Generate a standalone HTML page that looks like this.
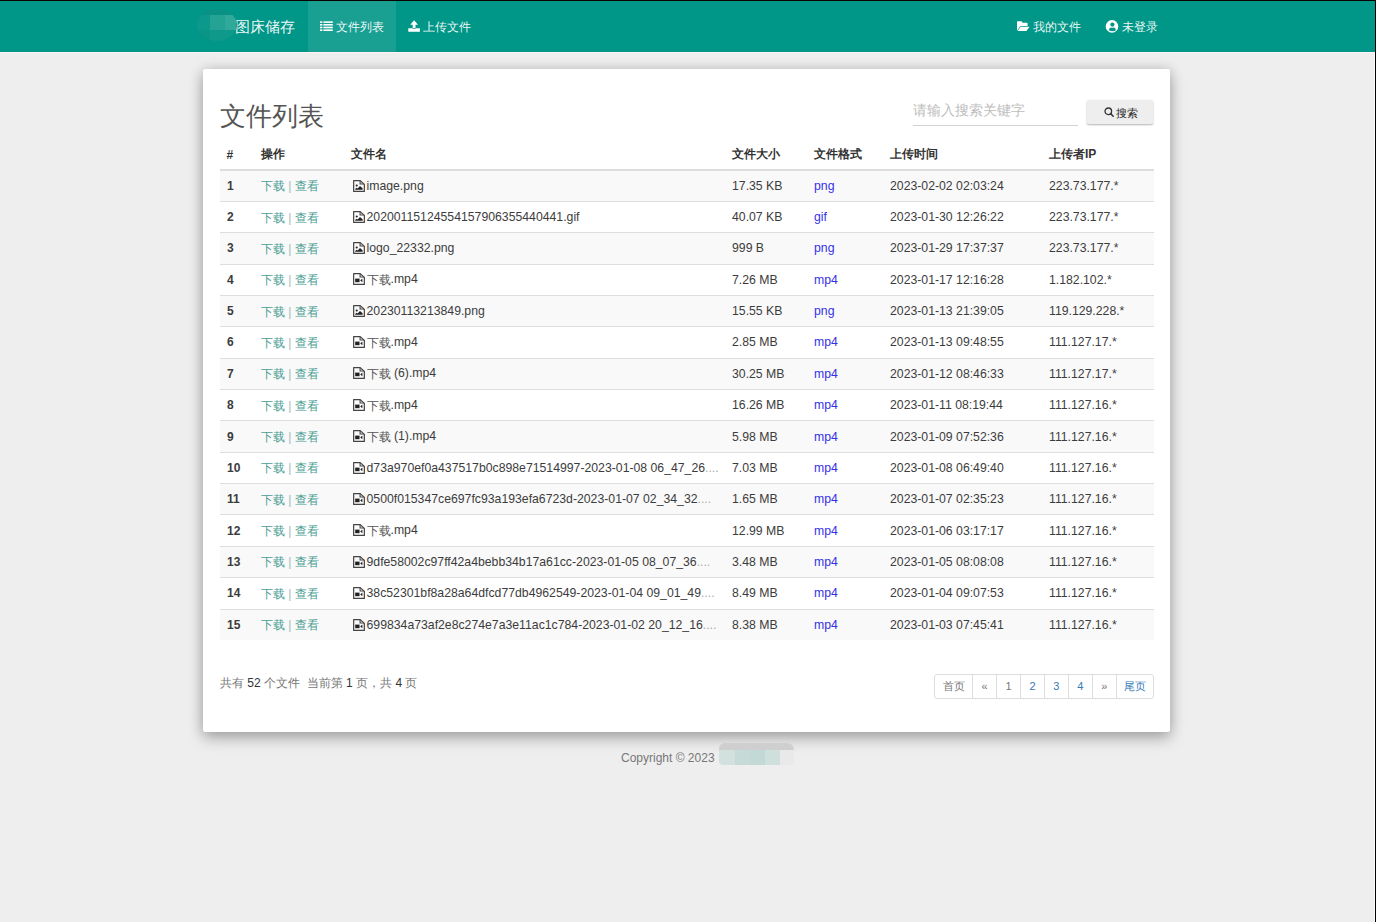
<!DOCTYPE html>
<html><head><meta charset="utf-8">
<style>
*{box-sizing:border-box}
html,body{margin:0;padding:0}
body{background:#eeeeee;font-family:"Liberation Sans",sans-serif;color:#333;font-size:12px;width:1376px;height:922px;overflow:hidden;position:relative}
.topline{position:absolute;left:0;top:0;width:1376px;height:1px;background:#0a0000}
.nav{position:absolute;left:0;top:1px;width:1376px;height:51px;background:#009688}
.navline{position:absolute;left:0;top:52px;width:1376px;height:1px;background:#fbf3f4}
.blob{position:absolute;left:197px;top:9px;width:40px;height:32px;border-radius:50%;overflow:hidden;background:#0b9587;z-index:3}
.blob i{position:absolute;display:block}
.brand{position:absolute;left:235px;top:17px;font-size:15.4px;color:rgba(255,255,255,.93);line-height:20px}
.nitem{position:absolute;top:1px;height:51px;color:rgba(255,255,255,.93);font-size:12px;line-height:51px}
.nitem.active{background:#1a9f93}
.nitem span{position:absolute;top:1px}
.nitem svg{position:absolute}
.card{position:absolute;left:203px;top:69px;width:967px;height:663px;background:#fff;border-radius:2px;box-shadow:0 6px 15px rgba(0,0,0,.28),0 0 13px rgba(0,0,0,.13)}
.title{position:absolute;left:17px;top:30px;font-size:26px;line-height:34px;color:#555;font-weight:300}
.search{position:absolute;left:710px;top:26px;width:165px;height:31px;border-bottom:1px solid #d2d2d2;color:#bdbdbd;font-size:14px;line-height:30px}
.btn{position:absolute;left:883.5px;top:31px;width:66.5px;height:24px;background:#eee;border-radius:2px;box-shadow:0 1px 2px rgba(0,0,0,.3);font-size:11px;line-height:27px;color:#333}
table{position:absolute;left:17px;top:69px;width:934px;border-collapse:collapse;font-size:12px}
th{text-align:left;font-weight:bold;height:32px;border-bottom:2px solid #ddd;padding:2px 0 0 8px;white-space:nowrap}
td{height:31.37px;font-size:12.25px;color:#3c3c3c;border-top:1px solid #ddd;padding:0 0 0 8px;white-space:nowrap}
tbody tr:nth-child(odd) td{background:#f9f9f9}
a{text-decoration:none}
.n{font-weight:bold;padding-left:7px}
.op{color:#4a9e95;position:relative;top:1px}
.sep{color:#9bb;font-size:12px;position:relative;top:1px}
.cj{font-style:normal;color:#555;position:relative;top:1px;font-size:12px}
.dots{font-style:normal;color:#aaa}
.op{font-size:12px}
.n{font-size:12px}
.fmt{color:#3530e6}
.fi{vertical-align:-2px;margin-left:2px;margin-right:1.5px}
.info{position:absolute;left:17px;top:606px;font-size:12px;color:#777}
.info b{font-weight:normal;color:#333}
.pager{position:absolute;left:731px;top:605px;height:25px;display:flex;border:1px solid #ddd;border-radius:3px}
.pager div{height:23px;line-height:22px;text-align:center;font-size:11px;color:#777;border-left:1px solid #ddd}
.pager div:first-child{border-left:0}
.pager .b{color:#337ab7}
.fblob{position:absolute;left:719px;top:743px;width:75px;height:22px;overflow:hidden;border-radius:4px 0 0 4px}
.fblob i{position:absolute;display:block}
.footer{position:absolute;left:621px;top:751px;font-size:12px;color:#777}
</style></head><body>
<svg width="0" height="0" style="position:absolute"><defs>
<symbol id="img" viewBox="0 0 11 12"><path d="M0.6,0.6H6.6L10.4,4.4V11.4H0.6Z" fill="none" stroke="#444" stroke-width="1.1" stroke-linejoin="round"/><path d="M6.5,0.8V3.9H10.2" fill="none" stroke="#444" stroke-width="1"/><circle cx="3.4" cy="5.4" r="1" fill="#222"/><path d="M2,9.7V8.9L3.3,7.7L4.3,8.4L6.4,6.1L8.8,8.3V9.7Z" fill="#222"/></symbol>
<symbol id="vid" viewBox="0 0 11 12"><path d="M0.6,0.6H6.6L10.4,4.4V11.4H0.6Z" fill="none" stroke="#444" stroke-width="1.1" stroke-linejoin="round"/><path d="M6.5,0.8V3.9H10.2" fill="none" stroke="#444" stroke-width="1"/><rect x="2" y="5.6" width="4" height="3.6" fill="#222"/><path d="M6.6,7.4L8.6,5.6V9.2Z" fill="#222"/></symbol>
</defs></svg>
<div class="topline"></div>
<div style="position:absolute;left:1375px;top:0;width:1px;height:922px;background:#000;z-index:5"></div>
<div style="position:absolute;left:1374px;top:53px;width:1px;height:869px;background:#fdfdfd;z-index:5"></div>
<div class="nav"></div>
<div class="navline"></div>
<div class="blob"><i style="left:0;top:0;width:39px;height:6px;background:#0a9084"></i><i style="left:0;top:6px;width:13px;height:15px;background:#0c988a"></i><i style="left:13px;top:6px;width:15px;height:15px;background:#24a294"></i><i style="left:28px;top:6px;width:11px;height:15px;background:#30a99a"></i><i style="left:0;top:21px;width:13px;height:11px;background:#0a9587"></i><i style="left:13px;top:21px;width:26px;height:11px;background:#0e998b"></i></div>
<div class="brand">图床储存</div>
<div class="nitem active" style="left:308px;width:88px"><span style="left:28px">文件列表</span></div>
<div class="nitem" style="left:396px;width:88px"><span style="left:27px">上传文件</span></div>
<div class="nitem" style="left:1005px;width:88px"><span style="left:28px">我的文件</span></div>
<div class="nitem" style="left:1093px;width:88px"><span style="left:28.5px">未登录</span></div>
<svg style="position:absolute;left:320px;top:21px" width="13" height="10" viewBox="0 0 13 10"><g fill="#fff"><rect x="0" y="0.3" width="2.4" height="1.6"/><rect x="3.4" y="0.3" width="9.4" height="1.6"/><rect x="0" y="3" width="2.4" height="1.6"/><rect x="3.4" y="3" width="9.4" height="1.6"/><rect x="0" y="5.7" width="2.4" height="1.6"/><rect x="3.4" y="5.7" width="9.4" height="1.6"/><rect x="0" y="8.4" width="2.4" height="1.6"/><rect x="3.4" y="8.4" width="9.4" height="1.6"/></g></svg>
<svg style="position:absolute;left:408px;top:20px" width="12" height="12" viewBox="0 0 12 12"><g fill="#fff"><path d="M2.2,4.8L6.1,0.3L10,4.8H7.5V8.3H4.7V4.8Z"/><path d="M0.3,8.2H4.6A1.5,0.9 0 0 0 7.6,8.2H11.9V11.7H0.3Z"/></g></svg>
<svg style="position:absolute;left:1017px;top:21px" width="13" height="10" viewBox="0 0 13 10"><g fill="#fff"><path d="M0,0.8Q0,0.2 0.6,0.2H4.6L5.6,1.8H10Q10.6,1.8 10.6,2.4V4.9H3.6L0,9.6Z"/><path d="M0.4,10H9.4L12.6,5.7H3.7Z"/></g></svg>
<svg style="position:absolute;left:1105px;top:19px" width="15" height="15" viewBox="0 0 15 15"><circle cx="7" cy="7.4" r="6.3" fill="#fff"/><circle cx="7.4" cy="5.6" r="2.1" fill="#009688"/><path d="M3.9,11.2Q4.3,8.6 5.8,8.5Q7.4,9.1 9,8.5Q10.6,8.6 10.9,11.2Q9.4,12.2 7.4,12.2Q5.4,12.2 3.9,11.2Z" fill="#009688"/></svg>


<div class="card">
<div class="title">文件列表</div>
<div class="search">请输入搜索关键字</div>
<div class="btn"><svg style="position:absolute;left:17px;top:7px" width="10" height="10" viewBox="0 0 10 10"><circle cx="4.3" cy="4.3" r="3.3" fill="none" stroke="#333" stroke-width="1.3"/><path d="M6.6,6.6L9.2,9.2" stroke="#333" stroke-width="1.5" stroke-linecap="round"/></svg><span style="position:absolute;left:29px;top:0;font-size:10.5px;color:#222">搜索</span></div>
<table>
<thead><tr><th style="width:33px;padding-left:6.5px">#</th><th style="width:90px">操作</th><th style="width:381px">文件名</th><th style="width:82px">文件大小</th><th style="width:76px">文件格式</th><th style="width:159px">上传时间</th><th>上传者IP</th></tr></thead>
<tbody id="tb">
<tr><td class="n">1</td><td><a class="op">下载</a><span class="sep"> | </span><a class="op">查看</a></td><td><svg class="fi" width="12" height="12" viewBox="0 0 11 12" preserveAspectRatio="none"><use href="#img"/></svg><span class="fn">image.png</span></td><td>17.35 KB</td><td><a class="fmt">png</a></td><td>2023-02-02 02:03:24</td><td>223.73.177.*</td></tr>
<tr><td class="n">2</td><td><a class="op">下载</a><span class="sep"> | </span><a class="op">查看</a></td><td><svg class="fi" width="12" height="12" viewBox="0 0 11 12" preserveAspectRatio="none"><use href="#img"/></svg><span class="fn">20200115124554157906355440441.gif</span></td><td>40.07 KB</td><td><a class="fmt">gif</a></td><td>2023-01-30 12:26:22</td><td>223.73.177.*</td></tr>
<tr><td class="n">3</td><td><a class="op">下载</a><span class="sep"> | </span><a class="op">查看</a></td><td><svg class="fi" width="12" height="12" viewBox="0 0 11 12" preserveAspectRatio="none"><use href="#img"/></svg><span class="fn">logo_22332.png</span></td><td>999 B</td><td><a class="fmt">png</a></td><td>2023-01-29 17:37:37</td><td>223.73.177.*</td></tr>
<tr><td class="n">4</td><td><a class="op">下载</a><span class="sep"> | </span><a class="op">查看</a></td><td><svg class="fi" width="12" height="12" viewBox="0 0 11 12" preserveAspectRatio="none"><use href="#vid"/></svg><span class="fn"><i class="cj">下载</i>.mp4</span></td><td>7.26 MB</td><td><a class="fmt">mp4</a></td><td>2023-01-17 12:16:28</td><td>1.182.102.*</td></tr>
<tr><td class="n">5</td><td><a class="op">下载</a><span class="sep"> | </span><a class="op">查看</a></td><td><svg class="fi" width="12" height="12" viewBox="0 0 11 12" preserveAspectRatio="none"><use href="#img"/></svg><span class="fn">20230113213849.png</span></td><td>15.55 KB</td><td><a class="fmt">png</a></td><td>2023-01-13 21:39:05</td><td>119.129.228.*</td></tr>
<tr><td class="n">6</td><td><a class="op">下载</a><span class="sep"> | </span><a class="op">查看</a></td><td><svg class="fi" width="12" height="12" viewBox="0 0 11 12" preserveAspectRatio="none"><use href="#vid"/></svg><span class="fn"><i class="cj">下载</i>.mp4</span></td><td>2.85 MB</td><td><a class="fmt">mp4</a></td><td>2023-01-13 09:48:55</td><td>111.127.17.*</td></tr>
<tr><td class="n">7</td><td><a class="op">下载</a><span class="sep"> | </span><a class="op">查看</a></td><td><svg class="fi" width="12" height="12" viewBox="0 0 11 12" preserveAspectRatio="none"><use href="#vid"/></svg><span class="fn"><i class="cj">下载</i> (6).mp4</span></td><td>30.25 MB</td><td><a class="fmt">mp4</a></td><td>2023-01-12 08:46:33</td><td>111.127.17.*</td></tr>
<tr><td class="n">8</td><td><a class="op">下载</a><span class="sep"> | </span><a class="op">查看</a></td><td><svg class="fi" width="12" height="12" viewBox="0 0 11 12" preserveAspectRatio="none"><use href="#vid"/></svg><span class="fn"><i class="cj">下载</i>.mp4</span></td><td>16.26 MB</td><td><a class="fmt">mp4</a></td><td>2023-01-11 08:19:44</td><td>111.127.16.*</td></tr>
<tr><td class="n">9</td><td><a class="op">下载</a><span class="sep"> | </span><a class="op">查看</a></td><td><svg class="fi" width="12" height="12" viewBox="0 0 11 12" preserveAspectRatio="none"><use href="#vid"/></svg><span class="fn"><i class="cj">下载</i> (1).mp4</span></td><td>5.98 MB</td><td><a class="fmt">mp4</a></td><td>2023-01-09 07:52:36</td><td>111.127.16.*</td></tr>
<tr><td class="n">10</td><td><a class="op">下载</a><span class="sep"> | </span><a class="op">查看</a></td><td><svg class="fi" width="12" height="12" viewBox="0 0 11 12" preserveAspectRatio="none"><use href="#vid"/></svg><span class="fn">d73a970ef0a437517b0c898e71514997-2023-01-08 06_47_26<i class="dots">....</i></span></td><td>7.03 MB</td><td><a class="fmt">mp4</a></td><td>2023-01-08 06:49:40</td><td>111.127.16.*</td></tr>
<tr><td class="n">11</td><td><a class="op">下载</a><span class="sep"> | </span><a class="op">查看</a></td><td><svg class="fi" width="12" height="12" viewBox="0 0 11 12" preserveAspectRatio="none"><use href="#vid"/></svg><span class="fn">0500f015347ce697fc93a193efa6723d-2023-01-07 02_34_32<i class="dots">....</i></span></td><td>1.65 MB</td><td><a class="fmt">mp4</a></td><td>2023-01-07 02:35:23</td><td>111.127.16.*</td></tr>
<tr><td class="n">12</td><td><a class="op">下载</a><span class="sep"> | </span><a class="op">查看</a></td><td><svg class="fi" width="12" height="12" viewBox="0 0 11 12" preserveAspectRatio="none"><use href="#vid"/></svg><span class="fn"><i class="cj">下载</i>.mp4</span></td><td>12.99 MB</td><td><a class="fmt">mp4</a></td><td>2023-01-06 03:17:17</td><td>111.127.16.*</td></tr>
<tr><td class="n">13</td><td><a class="op">下载</a><span class="sep"> | </span><a class="op">查看</a></td><td><svg class="fi" width="12" height="12" viewBox="0 0 11 12" preserveAspectRatio="none"><use href="#vid"/></svg><span class="fn">9dfe58002c97ff42a4bebb34b17a61cc-2023-01-05 08_07_36<i class="dots">....</i></span></td><td>3.48 MB</td><td><a class="fmt">mp4</a></td><td>2023-01-05 08:08:08</td><td>111.127.16.*</td></tr>
<tr><td class="n">14</td><td><a class="op">下载</a><span class="sep"> | </span><a class="op">查看</a></td><td><svg class="fi" width="12" height="12" viewBox="0 0 11 12" preserveAspectRatio="none"><use href="#vid"/></svg><span class="fn">38c52301bf8a28a64dfcd77db4962549-2023-01-04 09_01_49<i class="dots">....</i></span></td><td>8.49 MB</td><td><a class="fmt">mp4</a></td><td>2023-01-04 09:07:53</td><td>111.127.16.*</td></tr>
<tr><td class="n">15</td><td><a class="op">下载</a><span class="sep"> | </span><a class="op">查看</a></td><td><svg class="fi" width="12" height="12" viewBox="0 0 11 12" preserveAspectRatio="none"><use href="#vid"/></svg><span class="fn">699834a73af2e8c274e7a3e11ac1c784-2023-01-02 20_12_16<i class="dots">....</i></span></td><td>8.38 MB</td><td><a class="fmt">mp4</a></td><td>2023-01-03 07:45:41</td><td>111.127.16.*</td></tr>
</tbody>
</table>
<div class="info">共有 <b>52</b> 个文件 &nbsp;当前第 <b>1</b> 页，共 <b>4</b> 页</div>
<div class="pager"><div style="width:37px">首页</div><div style="width:24px">«</div><div style="width:24px">1</div><div class="b" style="width:24px">2</div><div class="b" style="width:23.7px">3</div><div class="b" style="width:24px">4</div><div style="width:24px">»</div><div class="b" style="width:37.3px">尾页</div></div>
</div>
<div class="footer">Copyright © 2023</div>
<div class="fblob"><i style="left:0;top:0;width:75px;height:7px;background:#cfcfcf;border-radius:8px 10px 0 0"></i><i style="left:0;top:7px;width:16px;height:15px;background:#d3e1de"></i><i style="left:16px;top:7px;width:15px;height:15px;background:#c6dbd7"></i><i style="left:31px;top:7px;width:15px;height:15px;background:#c3d9d5"></i><i style="left:46px;top:7px;width:15px;height:15px;background:#cfe0dc"></i><i style="left:61px;top:7px;width:14px;height:15px;background:#e9e9e9"></i></div>
</body></html>
